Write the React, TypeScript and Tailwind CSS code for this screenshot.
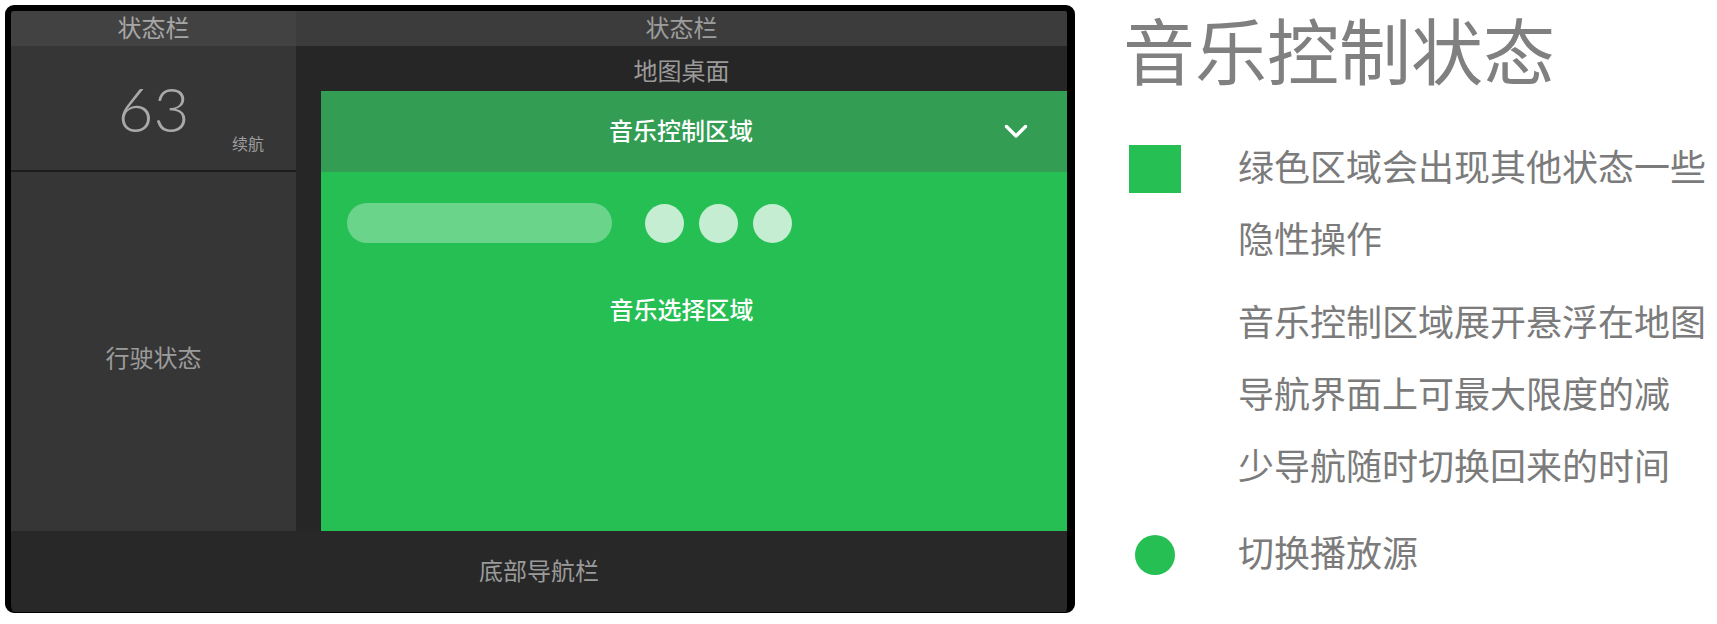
import React from "react";

function Chevron() {
  return (
    <svg width="24" height="15" viewBox="0 0 24 15" fill="none">
      <polyline points="2.5,2.5 12,12 21.5,2.5" stroke="#ffffff" strokeWidth="3.4" strokeLinecap="round" strokeLinejoin="round" />
    </svg>
  );
}

export default function App() {
  return (
    <div className="w-[1717px] h-[624px] bg-white flex items-start font-['Liberation_Sans','Noto_Sans_CJK_SC',sans-serif]">
      {/* Device frame */}
      <div className="ml-[5px] mt-[5px] w-[1070px] h-[608px] bg-black rounded-[9px] border-l-[6px] border-t-[6px] border-r-[8px] border-b-[1px] border-black overflow-hidden flex flex-col">
        {/* status bar row */}
        <div className="h-[35px] flex">
          <div className="w-[285px] bg-[#424242] flex items-center justify-center text-[24px] leading-none text-[#a6a6a6]">状态栏</div>
          <div className="flex-1 bg-[#3c3c3c] flex items-center justify-center text-[24px] leading-none text-[#9c9c9c]">状态栏</div>
        </div>
        {/* middle */}
        <div className="h-[485px] flex">
          {/* left column */}
          <div className="w-[285px] bg-[#363636] flex flex-col">
            <div className="h-[124px] flex flex-col pt-[39px]">
              <div className="h-[46px] text-center text-[62px] leading-[46px] font-light text-[#a9a9a9] font-['Lato','Liberation_Sans',sans-serif]">63</div>
              <div className="mt-[6px] pr-[32px] text-right text-[16px] leading-[16px] text-[#9d9d9d]">续航</div>
            </div>
            <div className="h-[2px] bg-[#1c1c1c]" />
            <div className="flex-1 flex items-center justify-center pt-[14px] text-[24px] leading-none text-[#9b9b9b]">行驶状态</div>
          </div>
          {/* map area */}
          <div className="flex-1 bg-[#262626] flex flex-col">
            <div className="h-[45px] flex items-center justify-center pt-[6px] text-[24px] leading-none text-[#9a9a9a]">地图桌面</div>
            <div className="flex-1 ml-[25px] flex flex-col bg-[#25bf53]">
              <div className="h-[81px] bg-[#329d53] flex items-center">
                <div className="flex-1 pl-[37px] text-center text-[24px] leading-none font-medium text-white">音乐控制区域</div>
                <div className="mr-[39px] flex items-center">
                  <Chevron />
                </div>
              </div>
              <div className="flex flex-col pt-[31px]">
                <div className="flex items-center pl-[26px]">
                  <div className="w-[265px] h-[40px] rounded-full bg-[#6bd48b]" />
                  <div className="ml-[33px] flex gap-[15px]">
                    <div className="w-[39px] h-[39px] rounded-full bg-[#c4edd1]" />
                    <div className="w-[39px] h-[39px] rounded-full bg-[#c4edd1]" />
                    <div className="w-[39px] h-[39px] rounded-full bg-[#c4edd1]" />
                  </div>
                </div>
                <div className="mt-[50px] pr-[25px] text-center text-[24px] leading-[36px] font-medium text-white">音乐选择区域</div>
              </div>
            </div>
          </div>
        </div>
        {/* bottom nav */}
        <div className="flex-1 bg-[#282828] flex items-center justify-center text-[24px] leading-none text-[#9a9a9a]">底部导航栏</div>
      </div>

      {/* Right legend */}
      <div className="ml-[48px] flex flex-col text-[#7b7b7b]">
        <div className="mt-[18px] h-[72px] text-[72px] leading-[72px] font-normal text-[#808080] whitespace-nowrap">音乐控制状态</div>
        <div className="mt-[43px] flex items-start">
          <div className="w-[64px] h-[72px] flex items-center justify-center">
            <div className="w-[52px] h-[48px] bg-[#25bf53]" />
          </div>
          <div className="ml-[51px] text-[36px] leading-[72px] whitespace-nowrap">
            <div>绿色区域会出现其他状态一些</div>
            <div>隐性操作</div>
          </div>
        </div>
        <div className="mt-[11px] flex items-start">
          <div className="w-[64px]" />
          <div className="ml-[51px] text-[36px] leading-[72px] whitespace-nowrap">
            <div>音乐控制区域展开悬浮在地图</div>
            <div>导航界面上可最大限度的减</div>
            <div>少导航随时切换回来的时间</div>
          </div>
        </div>
        <div className="mt-[15px] flex items-start">
          <div className="w-[64px] h-[72px] flex items-center justify-center">
            <div className="w-[40px] h-[40px] rounded-full bg-[#25bf53]" />
          </div>
          <div className="ml-[51px] text-[36px] leading-[72px] whitespace-nowrap">切换播放源</div>
        </div>
      </div>
    </div>
  );
}
